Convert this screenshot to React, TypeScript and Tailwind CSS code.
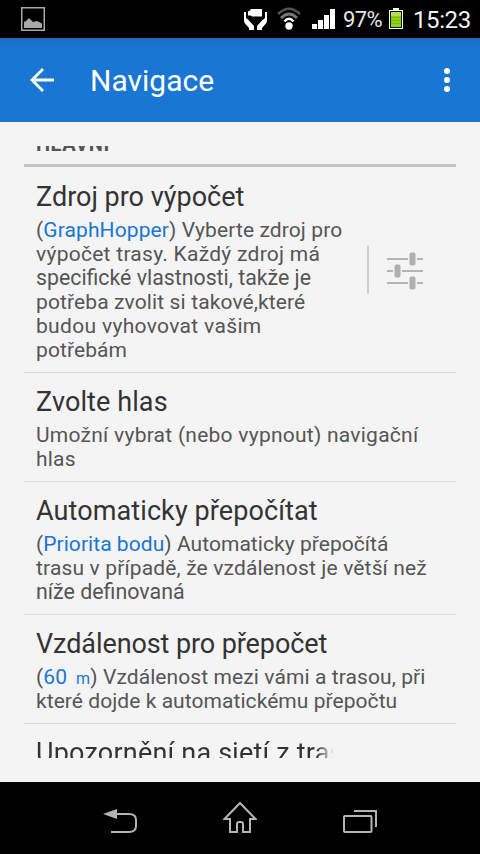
import React from 'react';

interface SettingLine {
  text: string;
  className?: string;
}

interface Setting {
  title: string;
  titleClass?: string;
  value?: React.ReactNode;
  lines: SettingLine[];
  hasOptions?: boolean;
}

const settings: Setting[] = [
  {
    title: 'Zdroj pro výpočet',
    value: 'GraphHopper',
    lines: [
      { text: 'Vyberte zdroj pro', className: 'tracking-[0.1px]' },
      { text: 'výpočet trasy. Každý zdroj má', className: 'tracking-[0.27px]' },
      { text: 'specifické vlastnosti, takže je', className: 'text-[21.3px]' },
      { text: 'potřeba zvolit si takové,které', className: 'tracking-[0.12px]' },
      { text: 'budou vyhovovat vašim', className: 'tracking-[0.33px]' },
      { text: 'potřebám', className: 'tracking-[0.1px]' },
    ],
    hasOptions: true,
  },
  {
    title: 'Zvolte hlas',
    titleClass: 'tracking-[0.1px]',
    lines: [
      { text: 'Umožní vybrat (nebo vypnout) navigační', className: 'tracking-[0.25px]' },
      { text: 'hlas', className: 'tracking-[0.2px]' },
    ],
  },
  {
    title: 'Automaticky přepočítat',
    titleClass: 'tracking-[0.1px]',
    value: 'Priorita bodu',
    lines: [
      { text: 'Automaticky přepočítá', className: 'tracking-[0.05px]' },
      { text: 'trasu v případě, že vzdálenost je větší než', className: 'tracking-[0.15px]' },
      { text: 'níže definovaná', className: 'text-[21.4px]' },
    ],
  },
  {
    title: 'Vzdálenost pro přepočet',
    titleClass: 'tracking-[-0.09px]',
    value: (
      <>
        60<span className="ml-[9px] text-[16px] leading-none">m</span>
      </>
    ),
    lines: [
      { text: 'Vzdálenost mezi vámi a trasou, při', className: 'tracking-[0.09px]' },
      { text: 'které dojde k automatickému přepočtu', className: 'tracking-[0.06px]' },
    ],
  },
];

const StatusBar = () => (
  <div className="flex h-[38px] shrink-0 items-center bg-black text-white">
    <svg className="ml-[21px] shrink-0" width="24" height="24" viewBox="0 0 24 24">
      <rect x=".75" y=".75" width="22.5" height="22.5" fill="none" stroke="#a8a8a8" strokeWidth="1.5" />
      <path d="M3 21v-6l2-1 3-3 4 4 4-1 5 2.500V21z" fill="#a8a8a8" />
    </svg>
    <svg className="mt-[2px] ml-[199px] shrink-0" width="24" height="22" viewBox="0 0 24 22">
      <path d="M6 1.500Q6 0 7.500 0H18v7.500H8L6.500 6.500H4V2.500z" fill="#fff" />
      <path d="M0 3h2v6l2.500 2L10 17v4H5v-2l-4-4.500Q0 13 0 11z" fill="#fff" />
      <path d="M23 3h-2v6l-2.500 2L13 17v4h5v-2l4-4.500Q23 13 23 11z" fill="#fff" />
    </svg>
    <svg className="ml-[9px] shrink-0" width="24" height="24" viewBox="0 0 24 24">
      <g fill="none" strokeWidth="2.600">
        <path d="M1 7Q12-3.500 23 7" stroke="#555" />
        <path d="M4 11Q12 3 20 11" stroke="#777" />
        <path d="M7.500 14.500Q12 9 16.500 14.500" stroke="#fff" />
      </g>
      <circle cx="12" cy="19" r="3.700" fill="#fff" />
    </svg>
    <svg className="ml-[11px] shrink-0" width="24" height="22" viewBox="0 0 24 22">
      <path d="M0 16h5v5H0zM6 12h5v9H6zM12 7h5v14h-5zM18 1h5v20h-5z" fill="#fff" />
    </svg>
    <span className="mt-[2px] ml-[7px] w-[46px] text-[22px] leading-6 tracking-[-0.6px] text-[#e6e6e6]">97%</span>
    <svg className="-mt-px shrink-0" width="14" height="21" viewBox="0 0 14 21">
      <path d="M4 0h6v2h4v19H0V2h4z" fill="#fff" />
      <path d="M1 3h12v17H1z" fill="#111" />
      <path d="M2 4h10v15H2z" fill="#8fd414" />
      <path d="M2 4h10v4H2z" fill="#b4df52" />
      <path d="M2 9.500h10M2 12.500h10M2 15.500h10" stroke="#77bf0b" />
    </svg>
    <span className="mt-[2px] ml-[10px] text-[24px] leading-7 tracking-[-0.4px] text-[#f2f2f2]">15:23</span>
  </div>
);

const Toolbar = () => (
  <header className="flex h-[84px] shrink-0 items-center bg-[#1976d2] bg-linear-to-b from-[#1b6dbe] to-[#1976d2] to-15% text-white">
    <svg className="ml-[30px]" width="24" height="24" viewBox="0 0 24 24">
      <path d="M13 1L2 12l11 11M2 12h22" fill="none" stroke="#fff" strokeWidth="2.800" />
    </svg>
    <h1 className="mt-[2px] ml-[36px] text-[30px] leading-9">Navigace</h1>
    <svg className="mr-[30px] ml-auto" width="6" height="24" viewBox="0 0 6 24">
      <circle cx="3" cy="3" r="3" fill="#fff" />
      <circle cx="3" cy="12" r="3" fill="#fff" />
      <circle cx="3" cy="21" r="3" fill="#fff" />
    </svg>
  </header>
);

const SlidersIcon = () => (
  <svg width="36" height="38" viewBox="0 0 36 38">
    <path d="M0 7h21M30 7h6M0 19h6M15 19h21M0 31h21M30 31h6" stroke="#b5b5b5" strokeWidth="2" />
    <g fill="#b0b0b0">
      <rect x="22.500" y=".5" width="6" height="13" rx="2" />
      <rect x="7.500" y="12.500" width="6" height="13" rx="2" />
      <rect x="22.500" y="24.500" width="6" height="13" rx="2" />
    </g>
  </svg>
);

const SettingRow = ({ setting }: { setting: Setting }) => (
  <div className="flex shrink-0 border-b border-[#d9d9d9] pt-[13px] pb-[10px] pl-3">
    <div className="min-w-0 flex-1 whitespace-nowrap">
      <h2 className="text-[27px] leading-8 text-[#333]">
        <span className={setting.titleClass}>{setting.title}</span>
      </h2>
      <p className="mt-[5px] text-[21px] leading-6 text-[#555]">
        {setting.lines.map((line, index) => (
          <span key={line.text} className="block h-6">
            <span className={line.className}>
              {index === 0 && setting.value && (
                <>
                  (<span className="text-[#1976d2]">{setting.value}</span>){' '}
                </>
              )}
              {line.text}
            </span>
          </span>
        ))}
      </p>
    </div>
    {setting.hasOptions && (
      <div className="mr-[33px] mb-1 flex h-12 items-center self-center border-l-2 border-[#d0d0d0] pt-[2px] pl-[18px]">
        <SlidersIcon />
      </div>
    )}
  </div>
);

const NavigationBar = () => (
  <nav className="flex h-[72px] shrink-0 items-center bg-black">
    <svg className="ml-[103px]" width="35" height="36" viewBox="0 0 35 36">
      <path d="M13 14h13q7 0 7 6v6q0 6-7 6H8" fill="none" stroke="#b4b4b4" strokeWidth="2" />
      <path d="M0 14l14-5v10z" fill="#b4b4b4" />
    </svg>
    <svg className="ml-[85px]" width="34" height="36" viewBox="0 0 34 36">
      <path
        d="M17 3L1.500 19H7v13h7v-8q0-2 2-2h2q2 0 2 2v8h7V19h5.500z"
        fill="none"
        stroke="#b4b4b4"
        strokeWidth="2"
      />
    </svg>
    <svg className="ml-[86px]" width="35" height="36" viewBox="0 0 35 36">
      <rect x="1" y="16" width="27.500" height="16" rx="1" fill="none" stroke="#b4b4b4" strokeWidth="2" />
      <path d="M11 11h22v16" fill="none" stroke="#b4b4b4" strokeWidth="2" />
    </svg>
  </nav>
);

export default function App() {
  return (
    <div className="flex h-[854px] w-[480px] flex-col overflow-hidden bg-[#f4f4f4] font-['Roboto',sans-serif]">
      <StatusBar />
      <Toolbar />
      <main className="mx-6 my-6 flex h-[612px] flex-col overflow-hidden">
        <div className="flex h-[21px] shrink-0 items-start border-b-[3px] border-[#c4c4c4] pl-3">
          <span className="-mt-[14px] text-[20px] leading-6 font-bold tracking-[0.5px] text-[#555]">HLAVNÍ</span>
        </div>
        <div className="mt-px shrink-0">
          {settings.map((setting) => (
            <SettingRow key={setting.title} setting={setting} />
          ))}
        </div>
        <div className="shrink-0 pt-[13px] pl-3">
          <h2 className="w-[298px] overflow-hidden bg-linear-to-r from-[#333] from-94% to-transparent bg-clip-text text-[27px] leading-8 tracking-[0.2px] whitespace-nowrap text-transparent">
            Upozornění na sjetí z trasy
          </h2>
        </div>
      </main>
      <NavigationBar />
    </div>
  );
}
